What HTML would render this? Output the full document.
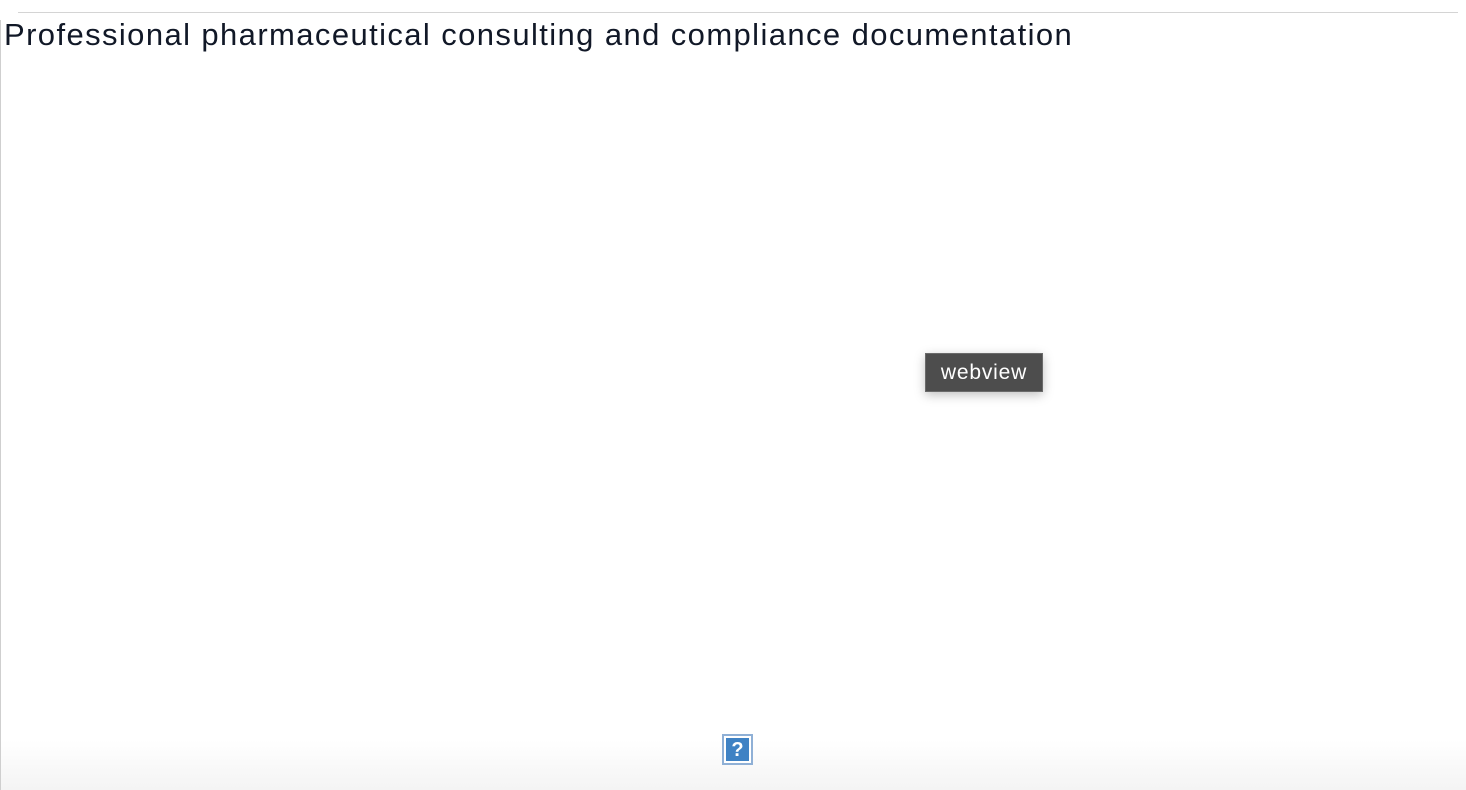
<!DOCTYPE html>
<html><head><style>
html,body{margin:0;padding:0;width:1466px;height:790px;overflow:hidden;background:#fff;font-family:"Liberation Sans",sans-serif;}
.line{position:absolute;left:18px;top:12px;width:1440px;height:1px;background:#d4d4d4;}
.vl{position:absolute;left:0;top:20px;width:1px;height:770px;background:#cfcfcf;}
.t{position:absolute;left:4px;top:17px;font-size:31px;color:#111827;white-space:nowrap;letter-spacing:1.4px;}
.tip{position:absolute;left:925px;top:353px;width:118px;height:39px;background:#4d4d4d;border:1px solid #6a6a6a;box-sizing:border-box;color:#fff;font-size:21px;line-height:37px;text-align:center;letter-spacing:0.8px;box-shadow:0 3px 10px rgba(0,0,0,0.25);}
.foot{position:absolute;left:0;top:740px;width:1466px;height:50px;background:linear-gradient(#fff,#f4f4f4);}
.q{position:absolute;left:722px;top:734px;width:31px;height:31px;box-sizing:border-box;border:2px solid #8fb0d6;background:#fff;padding:2px;}
.q div{width:100%;height:100%;background:#3f82c4;color:#fff;font-size:20px;font-weight:bold;text-align:center;line-height:24px;}
</style></head><body>
<div class="foot"></div>
<div class="line"></div>
<div class="vl"></div>
<div class="t">Professional pharmaceutical consulting and compliance documentation</div>
<div class="tip">webview</div>
<div class="q"><div>?</div></div>
</body></html>
